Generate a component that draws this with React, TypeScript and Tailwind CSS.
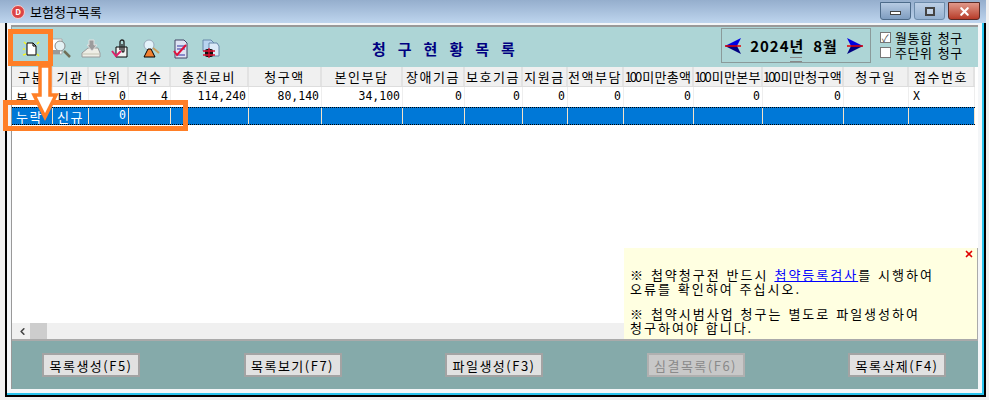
import { ChevronLeft, X } from "lucide-react";

const font = "font-['Noto_Sans_CJK_KR','Liberation_Sans',sans-serif]";

const columns = [
  { label: "구분", width: 41 },
  { label: "기관", width: 36 },
  { label: "단위", width: 40 },
  { label: "건수", width: 42 },
  { label: "총진료비", width: 78 },
  { label: "청구액", width: 73 },
  { label: "본인부담", width: 81 },
  { label: "장애기금", width: 62 },
  { label: "보호기금", width: 58 },
  { label: "지원금", width: 45 },
  { label: "전액부담", width: 56 },
  { label: "미만총액", width: 70, prefix: "100" },
  { label: "미만본부", width: 69, prefix: "100" },
  { label: "미만청구액", width: 81, prefix: "100" },
  { label: "청구일", width: 65 },
  { label: "접수번호", width: 66 },
];

const firstRow = ["본", "보험", "0", "4", "114,240", "80,140", "34,100", "0", "0", "0", "0", "0", "0", "0", "", "X"];
const secondRow = ["누락", "신규", "0", "", "", "", "", "", "", "", "", "", "", "", "", ""];
const buttons = ["목록생성(F5)", "목록보기(F7)", "파일생성(F3)", "심결목록(F6)", "목록삭제(F4)"];

function ToolIcon({ children }: { children: React.ReactNode }) {
  return (
    <svg width="22" height="22" viewBox="0 0 22 22" className="shrink-0 mt-[3px]">
      {children}
    </svg>
  );
}

function Toolbar() {
  return (
    <div className="flex items-center gap-[8px] pl-[8px] w-[220px] shrink-0">
      <ToolIcon>
        <path d="M7 5h6l3 3v9H7z" fill="#fff" stroke="#000" />
        <path d="M13 5v3h3" fill="none" stroke="#000" />
        <path d="M4 4l2 2M19 4l-2 2M3 17l3-1M19 18l-2-2M3 11h2" stroke="#f5f520" strokeWidth="1.5" />
      </ToolIcon>
      <ToolIcon>
        <path d="M2 1h10v15H2z" fill="#fff" stroke="#aaa" />
        <circle cx="10" cy="8" r="5" fill="#e4f1f4" stroke="#888" />
        <path d="M3 12h7v4H3z" fill="#9a9a9a" />
        <path d="M14 13l6 6" stroke="#6f6f58" strokeWidth="2.5" />
      </ToolIcon>
      <ToolIcon>
        <path d="M2 15l6-5h10l2 5v4H2z" fill="#eeeee6" stroke="#9a9a9a" />
        <path d="M3 16h16" stroke="#c4c4b4" />
        <path d="M9 2h5v5h3l-5 6-5-6h2z" fill="#9c9c9c" stroke="#e0e0e0" />
      </ToolIcon>
      <ToolIcon>
        <path d="M6 9h11v10H6z" fill="#f2f2f2" stroke="#000" />
        <path d="M10 12V4a2 2 0 0 1 4 0v9a1 1 0 0 1-2 0V6" fill="none" stroke="#222" strokeWidth="1.3" />
        <path d="M2 13l4 5 5-5" fill="none" stroke="#e0206a" strokeWidth="2" />
      </ToolIcon>
      <ToolIcon>
        <circle cx="9" cy="7" r="5" fill="#e3f2fa" stroke="#9ab" />
        <path d="M8 11h3l4 8H4z" fill="#f08030" stroke="#000" />
        <path d="M13 10l6 5" stroke="#c8a060" strokeWidth="2" />
      </ToolIcon>
      <ToolIcon>
        <path d="M5 2h9l3 3v15H5z" fill="#dfe4f4" stroke="#446" />
        <path d="M7 8h8M7 11h8M7 17h8" stroke="#3030a0" />
        <path d="M4 13l3 4 9-10" fill="none" stroke="#e0103a" strokeWidth="2" />
      </ToolIcon>
      <ToolIcon>
        <path d="M3 2h8l3 3v8H3z" fill="#b8d4f0" stroke="#6688aa" />
        <path d="M9 5h8l2 3v10H9z" fill="#dbeaf8" stroke="#6688aa" />
        <rect x="5" y="11" width="8" height="8" rx="2" fill="#111" />
        <path d="M3 13h12M3 17h12M9 10v10" stroke="#e01030" strokeWidth="1.3" />
      </ToolIcon>
    </div>
  );
}

function Cell({ value, width, index, selected }: { value: string; width: number; index: number; selected?: boolean }) {
  const left = index < 2 || index === 15;
  return (
    <div
      style={{ width }}
      className={`h-full shrink-0 border-r flex items-center overflow-hidden whitespace-nowrap ${
        left ? "justify-start pl-[4px]" : "justify-end pr-[2px]"
      } ${index < 2 ? "text-[13px] tracking-[1.5px]" : "font-['DejaVu_Sans_Mono',monospace] text-[11.5px]"} ${
        selected ? "border-[#f4e2c8] text-white" : "border-[#eeeeee] text-black"
      }`}
    >
      {value}
    </div>
  );
}

export default function App() {
  return (
    <div className={`relative w-[989px] h-[400px] bg-[#f0f0f0] overflow-hidden text-[13px] leading-none ${font}`}>
      <div className="w-[986px] h-[23px] flex items-center bg-gradient-to-b from-[#95aecd] to-[#bed5ee] pl-[11px]">
        <div className="w-[14px] h-[14px] rounded-full bg-[#dc4444] border border-[#f6d0d0] text-white text-[8px] font-bold flex items-center justify-center">
          D
        </div>
        <span className="ml-[5px] text-[13px] text-black">보험청구목록</span>
        <div className="ml-auto mr-[6px] flex items-start self-start gap-[3px] pt-[2px]">
          <div className="w-[31px] h-[18px] border border-[#4d6b8a] rounded-b-[3px] bg-gradient-to-b from-[#b7cbe3] to-[#7f9dc0] flex items-center justify-center">
            <div className="w-[11px] h-[4px] mt-[3px] bg-white border border-[#444]" />
          </div>
          <div className="w-[31px] h-[18px] border border-[#6d8cab] rounded-b-[3px] bg-gradient-to-b from-[#bdd0e6] to-[#95b2d2] flex items-center justify-center">
            <div className="w-[10px] h-[9px] border-2 border-[#444] bg-white/30" />
          </div>
          <div className="w-[32px] h-[18px] border border-[#5b2a25] rounded-b-[3px] bg-gradient-to-b from-[#e0988a] to-[#b63a28] flex items-center justify-center">
            <X size={13} strokeWidth={4} className="text-white" />
          </div>
        </div>
      </div>
      <div className="ml-[5px] w-[981px] h-[374px] border-l-2 border-r-2 border-b-2 border-black">
        <div className="h-full border-r-2 border-b-2 border-[#2ac4ee] bg-[#f4f6f8] pl-[4px] pr-[4px] pb-[4px] pt-[2px]">
          <div className="relative h-full border-l border-t-2 border-[#999] bg-[#f0f0f0] flex flex-col">
            <div className="h-[40px] shrink-0 bg-[#add5d6] flex items-center">
              <Toolbar />
              <div className="ml-[140px] text-[15px] font-bold text-[#000080] tracking-[12px] whitespace-nowrap mt-[2px]">
                청구현황목록
              </div>
              <div className="ml-auto self-start mt-[1px] mr-[9px] w-[150px] h-[35px] border border-[#8a9a9a] flex items-center justify-between pl-[2px] pr-[6px] relative shrink-0">
                <svg width="18" height="16" viewBox="0 0 18 16">
                  <path d="M1 8L17 0l-4 8z" fill="#0000e0" />
                  <path d="M1 8L17 16l-4-8z" fill="#000080" />
                  <path d="M1 8h16" stroke="#e00000" strokeWidth="1.5" />
                </svg>
                <span className="text-[15px] font-bold text-black whitespace-nowrap tracking-[1px]">2024년&nbsp;&nbsp;8월</span>
                <svg width="18" height="16" viewBox="0 0 18 16">
                  <path d="M17 8L1 0l4 8z" fill="#0000e0" />
                  <path d="M17 8L1 16l4-8z" fill="#000080" />
                  <path d="M1 8h16" stroke="#e00000" strokeWidth="1.5" />
                </svg>
                <div className="absolute bottom-[0px] left-[68px] w-[12px] h-[5px] border-y border-[#888]" />
              </div>
              <div className="w-[98px] shrink-0 self-start mt-[4px] flex flex-col gap-[2px] text-[13px] tracking-[0.5px] [word-spacing:2px]">
                <label className="flex items-center gap-[4px] h-[13px] whitespace-nowrap">
                  <span className="w-[11px] h-[11px] bg-white border border-[#777] flex items-center justify-center text-[#444] text-[10px]">✓</span>
                  월통합 청구
                </label>
                <label className="flex items-center gap-[4px] h-[13px] whitespace-nowrap">
                  <span className="w-[11px] h-[11px] bg-white border border-[#777]" />
                  주단위 청구
                </label>
              </div>
            </div>
            <div className="flex-1 min-h-0 bg-white flex flex-col">
              <div className="h-[20px] shrink-0 flex w-[963px] bg-[#f0f0f0] border-b border-[#ddd] text-[13px] tracking-[1.5px]">
                {columns.map((c) => (
                  <div
                    key={c.label}
                    style={{ width: c.width }}
                    className={`shrink-0 border-r-2 border-[#e2e2e2] flex items-center justify-center whitespace-nowrap overflow-hidden ${
                      c.prefix ? "tracking-[0.3px]" : ""
                    }`}
                  >
                    {c.prefix && <span className="tracking-[-2px] mr-[2px]">{c.prefix}</span>}
                    {c.label}
                  </div>
                ))}
              </div>
              <div className="h-[20px] shrink-0 flex w-[963px] bg-white">
                {firstRow.map((v, i) => (
                  <Cell key={i} value={v} width={columns[i].width} index={i} />
                ))}
              </div>
              <div className="h-[18px] shrink-0 flex w-[963px] bg-[#0078d7] border-y border-dotted border-black">
                {secondRow.map((v, i) => (
                  <Cell key={i} value={v} width={columns[i].width} index={i} selected />
                ))}
              </div>
              <div className="flex-1" />
              <div className="h-[16px] shrink-0 bg-[#f0f0f0] flex items-center">
                <div className="w-[18px] flex justify-end pr-[2px]">
                  <ChevronLeft size={11} strokeWidth={3.5} className="text-[#444]" />
                </div>
                <div className="w-[17px] h-full bg-[#cdcdcd]" />
              </div>
            </div>
            <div className="h-[50px] shrink-0 border-t-2 border-[#aaa] bg-[#85aaaa] flex items-center justify-between pl-[30px] pr-[32px]">
              {buttons.map((b, i) => (
                <button
                  key={b}
                  className={`w-[98px] h-[24px] border-2 whitespace-nowrap text-[13px] tracking-[1.5px] ${
                    i === 3 ? "bg-[#c8c8c8] text-[#8a8a8a] border-[#b0b0b0]" : "bg-[#e1e1e1] text-black border-[#a3a3a3]"
                  }`}
                >
                  {b}
                </button>
              ))}
            </div>
            <div className="absolute right-0 top-[221px] w-[354px] h-[92px] bg-[#ffffe1] border-r border-b border-[#aaa] pl-[6px] pt-[20px] text-[13px] leading-[14px] tracking-[2px] [word-spacing:1px] text-black whitespace-nowrap">
              <X size={10} strokeWidth={4} className="absolute right-[3px] top-[1px] text-[#e00000]" />
              <p>
                ※ 첩약청구전 반드시 <span className="text-[#0000ff] underline">첩약등록검사</span>를 시행하여
                <br />
                오류를 확인하여 주십시오.
              </p>
              <p className="mt-[11px]">
                ※ 첩약시범사업 청구는 별도로 파일생성하여
                <br />
                청구하여야 합니다.
              </p>
            </div>
          </div>
        </div>
      </div>
      <div className="absolute left-[8px] top-[29px] w-[45px] h-[37px] border-[5px] border-[#ff7f27]" />
      <div className="absolute left-[3px] top-[100px] w-[185px] h-[31px] border-[5px] border-[#ff7f27]" />
      <svg className="absolute left-[30px] top-[64px]" width="30" height="58" viewBox="0 0 30 58">
        <path d="M10 2h10v29h6L15 53 4 31h6z" fill="#fff" stroke="#ff7f27" strokeWidth="3.5" />
      </svg>
    </div>
  );
}
